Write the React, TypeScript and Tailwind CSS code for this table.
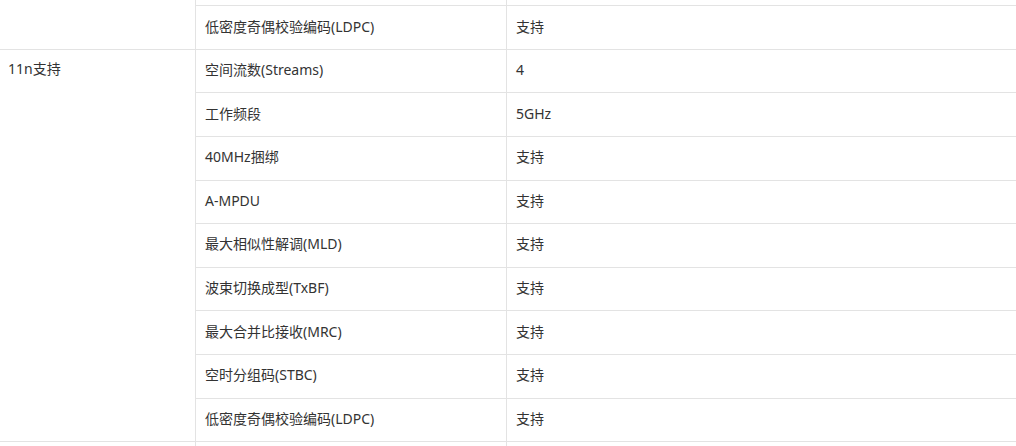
const prevRows = [
  ['', ''],
  ['低密度奇偶校验编码(LDPC)', '支持'],
];

const rows11n = [
  ['空间流数(Streams)', '4'],
  ['工作频段', '5GHz'],
  ['40MHz捆绑', '支持'],
  ['A-MPDU', '支持'],
  ['最大相似性解调(MLD)', '支持'],
  ['波束切换成型(TxBF)', '支持'],
  ['最大合并比接收(MRC)', '支持'],
  ['空时分组码(STBC)', '支持'],
  ['低密度奇偶校验编码(LDPC)', '支持'],
];

const cell = 'border border-[#e3e3e3] px-[9px] pt-0 pb-[3px] h-[43.6px] align-middle';

export default function App() {
  return (
    <div className="h-[446px] w-[1016px] overflow-hidden bg-white font-['Noto_Sans','Noto_Sans_CJK_SC',sans-serif] text-[14px] text-[#333]">
      <table className="-ml-px -mt-[38.4px] w-[1120px] table-fixed border-collapse">
        <colgroup>
          <col className="w-[196px]" />
          <col className="w-[311px]" />
          <col />
        </colgroup>
        <tbody>
          {prevRows.map(([k, v], i) => (
            <tr key={'p' + i}>
              {i === 0 && <td rowSpan={prevRows.length} className={cell + ' align-top'} />}
              <td className={cell}>{k}</td>
              <td className={cell}>{v}</td>
            </tr>
          ))}
          {rows11n.map(([k, v], i) => (
            <tr key={'n' + i}>
              {i === 0 && (
                <td rowSpan={rows11n.length} className="border border-[#e3e3e3] px-[8px] pt-[8px] align-top leading-[21px]">
                  11n支持
                </td>
              )}
              <td className={cell}>{k}</td>
              <td className={cell}>{v}</td>
            </tr>
          ))}
          <tr>
            <td className={cell} />
            <td className={cell} />
            <td className={cell} />
          </tr>
        </tbody>
      </table>
    </div>
  );
}
